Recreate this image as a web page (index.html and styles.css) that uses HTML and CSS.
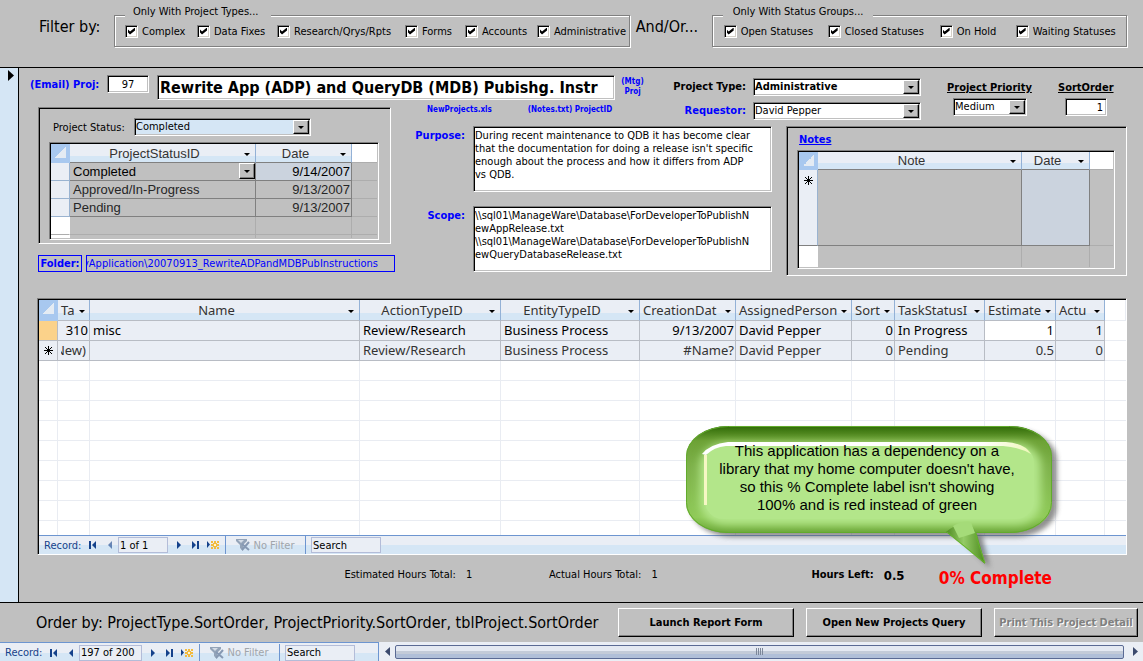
FILE: index.html
```html
<!DOCTYPE html>
<html lang="en">
<head>
<meta charset="utf-8">
<title>Projects</title>
<link rel="stylesheet" href="styles.css">
</head>
<body>
<svg width="0" height="0" class="defs" aria-hidden="true">
  <symbol id="i-first" viewBox="0 0 8 8"><path d="M0 0h2v8H0zM7 0v8L3 4z" fill="#15428b"/></symbol>
  <symbol id="i-prev" viewBox="0 0 8 8"><path d="M6 0v8L2 4z" fill="#15428b"/></symbol>
  <symbol id="i-next" viewBox="0 0 8 8"><path d="M2 0v8l4-4z" fill="#15428b"/></symbol>
  <symbol id="i-last" viewBox="0 0 8 8"><path d="M5 0h2v8H5zM0 0v8l4-4z" fill="#15428b"/></symbol>
  <symbol id="i-new" viewBox="0 0 12 8"><path d="M0 0v7l3-3.500z" fill="#15428b"/><path d="M4 0h2v2H4zM7 0h2v2H7zM10 0h2v2h-2zM4 3h8v2H4zM4 6h2v2H4zM7 6h2v2H7zM10 6h2v2h-2zM6 2h4v4H6z" fill="#f3bb3d"/><path d="M7 3h2v2H7z" fill="#fff6cf"/></symbol>
  <symbol id="i-filter" viewBox="0 0 14 12"><path d="M0 0h11v2L7 6v6l-3-3V6L0 2z" fill="#93a3b8"/><path d="M2 1h6L5 4z" fill="#d3dbe6"/><path d="M6 5l7 6M13 3L6 11" stroke="#8799b3" stroke-width="2" fill="none"/></symbol>
  <symbol id="i-star" viewBox="0 0 9 9"><path d="M4 0h1v9H4zM0 4h9v1H0z" fill="#000"/><path d="M1 1l7 7M8 1L1 8" stroke="#000" fill="none"/></symbol>
</svg>

<header class="filters">
  <span class="big by">Filter by:</span>
  <fieldset class="types">
    <legend>Only With Project Types...</legend>
    <div class="checks">
      <label><input type="checkbox" checked>Complex</label>
      <label><input type="checkbox" checked>Data Fixes</label>
      <label><input type="checkbox" checked>Research/Qrys/Rpts</label>
      <label><input type="checkbox" checked>Forms</label>
      <label><input type="checkbox" checked>Accounts</label>
      <label><input type="checkbox" checked>Administrative</label>
    </div>
  </fieldset>
  <span class="big or">And/Or...</span>
  <fieldset class="groups">
    <legend>Only With Status Groups...</legend>
    <div class="checks">
      <label><input type="checkbox" checked>Open Statuses</label>
      <label><input type="checkbox" checked>Closed Statuses</label>
      <label><input type="checkbox" checked>On Hold</label>
      <label><input type="checkbox" checked>Waiting Statuses</label>
    </div>
  </fieldset>
</header>

<main class="record">
  <div class="selector"><svg width="6" height="11" viewBox="0 0 6 11"><path d="M0 0v11l6-5.500z"/></svg></div>
  <div class="detail">
    <section class="form">
      <div class="title-row">
        <label class="link" for="proj">(Email) Proj:</label>
        <input id="proj" class="sunk proj" value="97">
        <input class="sunk title" aria-label="Project name" value="Rewrite App (ADP) and QueryDB (MDB) Pubishg. Instr">
        <a class="tiny" href="#">(Mtg)<br>Proj</a>
      </div>
      <div class="links">
        <a class="tiny" href="#">NewProjects.xls</a>
        <a class="tiny" href="#">(Notes.txt) ProjectID</a>
      </div>
      <div class="meta">
        <div class="pairs">
          <label for="ptype">Project Type:</label>
          <div class="combo bold"><select id="ptype"><option>Administrative</option></select><i></i></div>
          <label class="link" for="req">Requestor:</label>
          <div class="combo"><select id="req"><option>David Pepper</option></select><i></i></div>
        </div>
        <div class="stack prio">
          <label for="prio">Project Priority</label>
          <div class="combo"><select id="prio"><option>Medium</option></select><i></i></div>
        </div>
        <div class="stack sort">
          <label for="sort">SortOrder</label>
          <input id="sort" class="sunk" value="1">
        </div>
      </div>

      <div class="status">
        <div class="panel">
          <div class="status-row">
            <label for="pstat">Project Status:</label>
            <div class="combo blue"><select id="pstat"><option>Completed</option></select><i></i></div>
          </div>
          <div class="frame">
            <table class="sheet small">
              <colgroup><col class="w19"><col><col class="w96"><col class="w25"></colgroup>
              <thead><tr><th class="corner"></th><th><span class="h"><b>ProjectStatusID</b><u></u></span></th><th><span class="h"><b>Date</b><u></u></span></th><th class="blank"></th></tr></thead>
              <tbody>
                <tr class="cur"><th></th><td><span class="cell-combo">Completed<i></i></span></td><td class="num sel">9/14/2007</td><td class="off"></td></tr>
                <tr><th></th><td>Approved/In-Progress</td><td class="num">9/13/2007</td><td class="off"></td></tr>
                <tr><th></th><td>Pending</td><td class="num">9/13/2007</td><td class="off"></td></tr>
                <tr class="empty"><th></th><td></td><td></td><td></td></tr>
                <tr class="empty sliver"><th></th><td></td><td></td><td></td></tr>
              </tbody>
            </table>
          </div>
        </div>
        <div class="folder">
          <label for="path">Folder:</label>
          <a id="path" href="#">cyApplication\20070913_RewriteADPandMDBPubInstructions</a>
        </div>
      </div>

      <div class="memos">
        <label class="link" for="purpose">Purpose:</label>
        <textarea id="purpose" class="sunk">During recent maintenance to QDB it has become clear
that the documentation for doing a release isn't specific
enough about the process and how it differs from ADP
vs QDB.</textarea>
        <label class="link" for="scope">Scope:</label>
        <textarea id="scope" class="sunk">\\sql01\ManageWare\Database\ForDeveloperToPublishN
ewAppRelease.txt
\\sql01\ManageWare\Database\ForDeveloperToPublishN
ewQueryDatabaseRelease.txt</textarea>
      </div>

      <div class="panel notes">
        <a href="#" class="notes-link">Notes</a>
        <div class="frame">
          <table class="sheet small">
            <colgroup><col class="w19"><col><col class="w68"><col class="w23"></colgroup>
            <thead><tr><th class="corner"></th><th><span class="h"><b>Note</b><u></u></span></th><th><span class="h"><b>Date</b><u></u></span></th><th class="blank"></th></tr></thead>
            <tbody>
              <tr class="tall"><th><svg width="9" height="9"><use href="#i-star"/></svg></th><td></td><td class="sel"></td><td class="off"></td></tr>
              <tr class="empty"><th></th><td></td><td></td><td></td></tr>
            </tbody>
          </table>
        </div>
      </div>
    </section>

    <section class="tasks">
      <table class="sheet main">
        <colgroup><col class="w19"><col class="w32"><col><col class="w141"><col class="w139"><col class="w96"><col class="w116"><col class="w43"><col class="w90"><col class="w71"><col class="w49"><col class="w21"></colgroup>
        <thead><tr><th class="corner"></th>
          <th><span class="h cut"><b>Ta</b><u></u></span></th>
          <th><span class="h"><b>Name</b><u></u></span></th>
          <th><span class="h"><b>ActionTypeID</b><u></u></span></th>
          <th><span class="h"><b>EntityTypeID</b><u></u></span></th>
          <th><span class="h cut"><b>CreationDat</b><u></u></span></th>
          <th><span class="h cut"><b>AssignedPerson</b><u></u></span></th>
          <th><span class="h cut"><b>Sort</b><u></u></span></th>
          <th><span class="h cut"><b>TaskStatusI</b><u></u></span></th>
          <th><span class="h cut"><b>Estimate</b><u></u></span></th>
          <th><span class="h cut"><b>Actu</b><u></u></span></th>
          <th class="blank"></th></tr></thead>
        <tbody>
          <tr class="cur"><th class="here"></th><td class="num">310</td><td>misc</td><td>Review/Research</td><td>Business Process</td><td class="num">9/13/2007</td><td>David Pepper</td><td class="num">0</td><td>In Progress</td><td class="num focus">1</td><td class="num">1</td><td class="off"></td></tr>
          <tr><th><svg width="9" height="9"><use href="#i-star"/></svg></th><td><span class="tail">(New)</span></td><td></td><td>Review/Research</td><td>Business Process</td><td class="num">#Name?</td><td>David Pepper</td><td class="num">0</td><td>Pending</td><td class="num">0.5</td><td class="num">0</td><td class="off"></td></tr>
          <tr class="empty"><th></th><td></td><td></td><td></td><td></td><td></td><td></td><td></td><td></td><td></td><td></td><td></td></tr>
          <tr class="empty"><th></th><td></td><td></td><td></td><td></td><td></td><td></td><td></td><td></td><td></td><td></td><td></td></tr>
          <tr class="empty"><th></th><td></td><td></td><td></td><td></td><td></td><td></td><td></td><td></td><td></td><td></td><td></td></tr>
          <tr class="empty"><th></th><td></td><td></td><td></td><td></td><td></td><td></td><td></td><td></td><td></td><td></td><td></td></tr>
          <tr class="empty"><th></th><td></td><td></td><td></td><td></td><td></td><td></td><td></td><td></td><td></td><td></td><td></td></tr>
          <tr class="empty"><th></th><td></td><td></td><td></td><td></td><td></td><td></td><td></td><td></td><td></td><td></td><td></td></tr>
          <tr class="empty"><th></th><td></td><td></td><td></td><td></td><td></td><td></td><td></td><td></td><td></td><td></td><td></td></tr>
          <tr class="empty"><th></th><td></td><td></td><td></td><td></td><td></td><td></td><td></td><td></td><td></td><td></td><td></td></tr>
          <tr class="empty sliver"><th></th><td></td><td></td><td></td><td></td><td></td><td></td><td></td><td></td><td></td><td></td><td></td></tr>
        </tbody>
      </table>
      <nav class="recnav">
        <label for="rec1">Record:</label>
        <button aria-label="First"><svg width="8" height="8"><use href="#i-first"/></svg></button>
        <button aria-label="Previous" disabled><svg width="8" height="8"><use href="#i-prev"/></svg></button>
        <input id="rec1" class="pos" value="1 of 1">
        <button aria-label="Next"><svg width="8" height="8"><use href="#i-next"/></svg></button>
        <button aria-label="Last"><svg width="8" height="8"><use href="#i-last"/></svg></button>
        <button aria-label="New"><svg width="12" height="8"><use href="#i-new"/></svg></button>
        <button class="nofilter" disabled><svg width="14" height="12"><use href="#i-filter"/></svg>No Filter</button>
        <input class="search" aria-label="Search" value="Search">
      </nav>
      <div class="callout">
        <svg width="390" height="158" viewBox="680 418 390 158" aria-hidden="true">
          <defs>
            <linearGradient id="rim" x1="0" y1="0" x2="0" y2="1">
              <stop offset="0" stop-color="#2f6a06"/><stop offset=".14" stop-color="#6da236"/><stop offset=".4" stop-color="#7fb34c"/><stop offset=".85" stop-color="#8fca58"/><stop offset="1" stop-color="#69a536"/>
            </linearGradient>
            <linearGradient id="tip" x1="0" y1="0" x2="1" y2="0">
              <stop offset="0" stop-color="#4f8a22"/><stop offset=".45" stop-color="#94cb66"/><stop offset="1" stop-color="#4c8a1e"/>
            </linearGradient>
            <linearGradient id="shine" x1="0" y1="0" x2="1" y2="0">
              <stop offset="0" stop-color="#fff"/><stop offset=".85" stop-color="#fff"/><stop offset="1" stop-color="#eef7b8"/>
            </linearGradient>
            <filter id="soft" x="-20%" y="-20%" width="140%" height="140%"><feGaussianBlur stdDeviation="2.500"/></filter>
            <filter id="glow" x="-20%" y="-20%" width="140%" height="140%"><feGaussianBlur stdDeviation="4"/></filter>
            <clipPath id="body"><rect x="686" y="426" width="366" height="107" rx="42" ry="30"/></clipPath>
          </defs>
          <g fill="#555" opacity=".65" filter="url(#soft)"><rect x="691" y="430" width="366" height="107" rx="42" ry="30"/><path d="M950 528l40 40-10-40z"/></g>
          <rect x="686" y="426" width="366" height="107" rx="42" ry="30" fill="url(#rim)"/>
          <g clip-path="url(#body)"><rect x="700" y="443" width="341" height="82" rx="26" ry="22" fill="#b3e68a" filter="url(#glow)"/></g>
          <rect x="705" y="445" width="329" height="74" rx="18" fill="#b3e68a"/>
          <path d="M702 454q8-10 26-12h278q18 1 25 12-12-7-28-8H726q-12 1-20 9z" fill="url(#shine)"/>
          <path d="M704 455h3v50h-3z" fill="#f6f7c4"/>
          <rect x="686.500" y="426.500" width="365" height="106" rx="42" ry="30" fill="none" stroke="#62ab2c"/>
          <path d="M946 532q10-8 16-8 9-4 9 0l6 10 8 30z" fill="url(#tip)"/>
          <path d="M947 532l38 31-10-30" fill="none" stroke="#66b52b"/>
          <path d="M953 526q10-6 18-4l4 11-16 5z" fill="#a5db79"/>
        </svg>
        <p>This application has a dependency on a<br>library that my home computer doesn't have,<br>so this % Complete label isn't showing<br>100% and is red instead of green</p>
      </div>
    </section>

    <section class="totals">
      <span>Estimated Hours Total:</span><output>1</output>
      <span>Actual Hours Total:</span><output>1</output>
      <strong>Hours Left:</strong><output class="left">0.5</output>
      <strong class="done">0% Complete</strong>
    </section>
  </div>
</main>

<footer class="actions">
  <span class="big">Order by: ProjectType.SortOrder, ProjectPriority.SortOrder, tblProject.SortOrder</span>
  <button>Launch Report Form</button>
  <button>Open New Projects Query</button>
  <button class="narrow" disabled>Print This Project Detail</button>
</footer>

<div class="bottom">
  <nav class="recnav">
    <label for="rec2">Record:</label>
    <button aria-label="First"><svg width="8" height="8"><use href="#i-first"/></svg></button>
    <button aria-label="Previous"><svg width="8" height="8"><use href="#i-prev"/></svg></button>
    <input id="rec2" class="pos wide" value="197 of 200">
    <button aria-label="Next"><svg width="8" height="8"><use href="#i-next"/></svg></button>
    <button aria-label="Last"><svg width="8" height="8"><use href="#i-last"/></svg></button>
    <button aria-label="New"><svg width="12" height="8"><use href="#i-new"/></svg></button>
    <button class="nofilter" disabled><svg width="14" height="12"><use href="#i-filter"/></svg>No Filter</button>
    <input class="search" aria-label="Search" value="Search">
  </nav>
  <div class="scroll">
    <svg width="5" height="9" viewBox="0 0 5 9"><path d="M5 0v9L0 4.500z" fill="#3c4a6e"/></svg>
    <div class="thumb"><svg width="7" height="7"><path d="M0 0h1v7H0zM2 0h1v7H2zM4 0h1v7H4zM6 0h1v7H6z" fill="#7c8799"/></svg></div>
    <svg width="5" height="9" viewBox="0 0 5 9"><path d="M0 0v9l5-4.500z" fill="#3c4a6e"/></svg>
  </div>
</div>
</body>
</html>
```
FILE: styles.css
```css
:root {
  --ui: "DejaVu Sans Condensed", "DejaVu Sans", sans-serif;
  --face: #c0c0c0;
  --sky: #d5e6f5;
  --link: #0000ff;
}

* { box-sizing: border-box; }

body {
  margin: 0;
  min-height: 100vh;
  display: flex;
  flex-direction: column;
  background: var(--face);
  color: #000;
  font: 11px/13px var(--ui);
  overflow: hidden;
}

input, select, textarea, button {
  font: inherit;
  color: inherit;
  margin: 0;
  border-radius: 0;
}

a { color: var(--link); text-decoration: none; }
.defs { display: block; position: absolute; }
.big { font-size: 16px; line-height: 20px; white-space: nowrap; }
.link { color: var(--link); }

/* header */
.filters {
  display: flex;
  align-items: flex-start;
  height: 68px;
  padding: 6px 16px 0 39px;
  border-bottom: 1px solid #000;
}
.filters .big { padding-top: 11px; flex: none; }
.filters .by { width: 63px; }
.filters .or { width: 67px; }
fieldset {
  margin: 0;
  padding: 0 0 8px 10px;
  border: 1px solid #808080;
  box-shadow: 1px 1px #fff, inset 1px 1px #fff;
  min-width: 0;
}
legend {
  width: 146px;
  padding: 0 8px 6px;
  line-height: 12px;
  white-space: nowrap;
  background: var(--face);
}
.groups legend { width: 150px; padding-left: 10px; }
.types { flex: 517 1 0; margin: 0 6px 0 12px; }
.groups { flex: 414 1 0; margin-left: 9px; }
.checks { display: grid; grid-template-columns: 72px 80px 128px 60px 72px auto; }
.groups .checks { grid-template-columns: 104px 112px 76px auto; padding-left: 1px; }
.checks label { display: flex; align-items: center; gap: 4px; height: 14px; white-space: nowrap; }
.checks input {
  appearance: none;
  flex: none;
  width: 13px;
  height: 13px;
  background: #fff;
  border: 1px solid;
  border-color: #808080 #fff #fff #808080;
  box-shadow: inset 1px 1px #000, inset -1px -1px #d4d0c8;
}
.checks input:checked::before {
  content: "";
  display: block;
  width: 7px;
  height: 7px;
  margin: 2px;
  background: #000;
  clip-path: polygon(0 29%, 29% 57%, 100% 0, 100% 43%, 29% 100%, 0 71%);
}

/* record area */
.record { display: flex; flex: 1; }
.selector { width: 19px; flex: none; padding: 2px 0 0 8px; background: var(--sky); border-right: 1px solid #000; }
.selector svg { display: block; }
.detail { flex: 1; min-width: 0; display: flex; flex-direction: column; padding: 7px 16px 0 11px; }

.form {
  display: grid;
  grid-template-columns: 377px 243px 128px 1fr;
  grid-template-rows: 32px 19px auto;
}
.title-row { grid-column: 1 / 3; grid-row: 1; display: flex; align-items: flex-start; font-weight: bold; }
.title-row label { width: 77px; padding-top: 3px; white-space: nowrap; }
.sunk, .combo, .frame, .tasks, .panel {
  border: 1px solid;
  border-color: #808080 #fff #fff #808080;
  box-shadow: inset 1px 1px #000, inset -1px -1px #c0c0c0;
}
.sunk { background: #fff; outline: none; }
.proj { width: 42px; height: 18px; text-align: center; font-weight: normal; margin-right: 8px; }
.title { flex: 1; min-width: 0; height: 25px; padding: 0 2px; font-size: 16px; line-height: 20px; font-weight: bold; }
.tiny { font-size: 8px; line-height: 10px; font-weight: bold; text-align: center; white-space: nowrap; }
.title-row .tiny { width: 35px; padding-top: 2px; }
.links { grid-column: 2; grid-row: 2; display: flex; gap: 36px; padding-left: 20px; white-space: nowrap; }
.links .tiny { padding-top: 0; line-height: 6px; }

.meta { grid-column: 3 / 5; grid-row: 1 / 3; display: flex; align-items: flex-start; font-weight: bold; }
.pairs { display: grid; grid-template-columns: 96px 168px; column-gap: 7px; row-gap: 6px; padding-top: 3px; }
.pairs label { text-align: right; line-height: 18px; white-space: nowrap; }
.pairs .combo { font-weight: normal; }
.pairs .bold { font-weight: bold; }
.combo { display: inline-grid; grid-template: 16px / minmax(0, 1fr) 17px; background: #fff; height: 18px; }
.combo select {
  grid-area: 1 / 1 / 2 / 3;
  appearance: none;
  width: 100%;
  height: 16px;
  border: 0;
  padding: 0 1px;
  line-height: 16px;
  background: none;
  outline: none;
}
.combo i, .cell-combo i {
  grid-area: 1 / 2;
  width: 16px;
  height: 14px;
  margin-top: 1px;
  pointer-events: none;
  background: var(--face);
  border: 1px solid;
  border-color: #fff #000 #000 #fff;
  box-shadow: inset -1px -1px #808080;
  display: grid;
  place-items: center;
}
.combo i::before, .cell-combo i::before, .h u::before {
  content: "";
  border: solid transparent;
  border-width: 3px 3px 0;
  border-top-color: #000;
}
.combo.blue { background: var(--sky); width: 177px; }
.stack { display: flex; flex-direction: column; gap: 4px; font-weight: bold; }
.stack label { text-decoration: underline; white-space: nowrap; padding-top: 6px; }
.stack .combo, .stack input { font-weight: normal; }
.prio { margin-left: 26px; width: 88px; }
.prio .combo { width: 74px; margin-left: 6px; }
.sort { margin-left: 23px; }
.sort input { width: 42px; height: 18px; margin-left: 7px; padding: 0 3px; text-align: right; }

.status { grid-column: 1; grid-row: 2 / 4; padding-left: 8px; }
.panel { padding: 10px 11px 3px 10px; box-shadow: inset 1px 1px #000; }
.status .panel { width: 353px; }
.status-row { display: flex; justify-content: space-between; align-items: center; padding: 0 68px 0 4px; margin-bottom: 6px; }
.frame { overflow: hidden; padding: 1px; }
.folder { display: flex; gap: 4px; margin-top: 11px; width: 357px; color: var(--link); }
.folder label, .folder a { border: 1px solid var(--link); height: 17px; line-height: 15px; }
.folder label { width: 44px; font-weight: bold; text-align: center; }
.folder a { flex: 1; min-width: 0; overflow: hidden; display: flex; justify-content: flex-end; padding-right: 16px; white-space: nowrap; }

.memos {
  grid-column: 2 / 4;
  grid-row: 3;
  display: grid;
  grid-template-columns: 58px 299px;
  grid-template-rows: 66px 66px;
  row-gap: 14px;
  column-gap: 8px;
  font-weight: bold;
}
.memos label { text-align: right; padding-top: 3px; }
.memos textarea { resize: none; overflow: hidden; white-space: pre; padding: 2px 1px 0 1px; font-weight: normal; }

.notes { grid-column: 4; grid-row: 3; margin-left: 8px; padding: 6px 11px 6px 10px; }
.notes-link { display: block; margin: 0 0 4px 2px; font-weight: bold; text-decoration: underline; }

/* datasheets */
.sheet { width: 100%; table-layout: fixed; border-collapse: separate; border-spacing: 0; }
.sheet th, .sheet td { padding: 0 3px; overflow: hidden; white-space: nowrap; font-weight: normal; text-align: left; }
.sheet th { text-align: center; }
.sheet .num { text-align: right; padding: 0 1px; }
.small { font: 13px/17px "Liberation Sans", Arial, sans-serif; }
.small th, .small td { height: 18px; border-right: 1px solid #808080; border-bottom: 1px solid #808080; }
.small tbody th { background: #eaeef5; border-right-color: #9ab3d0; border-bottom-color: #9ab3d0; }
.sheet thead th { background: linear-gradient(#eaeef5 66%, #d5e6f5 66%); border-right-color: #93b1d6; color: #333; padding: 0; }
.sheet thead .corner { background: linear-gradient(135deg, transparent 50%, #e4ebf3 50%) 4px 3px / 11px 11px no-repeat #a8c8ef; border-color: #a8c8ef; }
.sheet thead .blank { background: #fff; }
.small td { color: #262626; }
.small .cur td { color: #000; }
.small td.sel { background: #cbd3de; }
.small td.off { border-right: 0; border-bottom-color: #adadad; }
.small .blank { border-right: 0; border-bottom-color: #adadad; }
.small .empty td { border-color: #adadad; }
.small .empty td:last-child { border-right: 0; }
.small .empty th { background: #fff; border-color: #fff #fff #adadad; }
.small .sliver th, .small .sliver td { height: 3px; border-bottom: 0; }
.status thead th { height: 19px; }
.notes .tall th, .notes .tall td { height: 76px; }
.notes .tall th { vertical-align: top; padding-top: 6px; border-bottom-color: #808080; }
.notes .empty th, .notes .empty td { height: 21px; border-bottom: 0; }
.sheet svg { display: block; margin: auto; }
.h { display: flex; align-items: center; }
.h b { flex: 1; min-width: 0; overflow: hidden; font-weight: normal; text-align: center; }
.h.cut b { text-align: left; padding-left: 3px; }
.h u { flex: none; width: 15px; margin-right: 1px; display: grid; place-items: center; padding-top: 2px; }
.h.cut u { width: 13px; }
.cell-combo { display: flex; justify-content: space-between; margin-right: -3px; }
.cell-combo i { height: 16px; margin-top: 0; }

.w19 { width: 19px; } .w21 { width: 21px; } .w23 { width: 23px; } .w25 { width: 25px; }
.w32 { width: 32px; } .w43 { width: 43px; } .w49 { width: 49px; } .w68 { width: 68px; }
.w71 { width: 71px; } .w90 { width: 90px; } .w96 { width: 96px; } .w116 { width: 116px; }
.w139 { width: 139px; } .w141 { width: 141px; }

.tasks { position: relative; margin: 22px 0 0 7px; padding: 1px 0 0 1px; background: #fff; }
.main { font: 13px/19px "Noto Sans", "Open Sans", sans-serif; }
.main th, .main td { height: 20px; border-right: 1px solid #b8bcc4; border-bottom: 1px solid #b8bcc4; background: #eaeef5; }
.main thead th { height: 21px; }
.main td { color: #333; }
.main .cur td { color: #000; }
.main .here { background: #fbd28a; }
.main .num.focus { background: #fff; }
.main .off, .main .empty td, .main .empty th { background: #fff; border-color: #e9ecf2; }
.main .blank { border-color: #e9ecf2; }
.main td:last-child { border-right: 0; }
.main .sliver th, .main .sliver td { height: 14px; border-bottom: 0; }
.tail { display: flex; justify-content: flex-end; overflow: hidden; }

/* record navigation */
.recnav {
  display: flex;
  align-items: center;
  height: 20px;
  padding-left: 5px;
  background: linear-gradient(#eaeef5 50%, #d5e6f5 50%);
  border-top: 1px solid #6d95d0;
}
.tasks .recnav { height: 19px; }
.recnav label { color: #15428b; width: 40px; }
.recnav button { width: 17px; height: 18px; padding: 0; border: 0; background: none; display: flex; align-items: center; justify-content: center; }
.recnav button:disabled svg { opacity: .6; }
.recnav input { height: 16px; padding: 0 1px; border: 1px solid #b3bcd8; background: #eaeef5; outline: none; }
.recnav .pos { width: 50px; margin-right: 2px; }
.recnav .wide { width: 63px; }
.recnav .nofilter { width: 81px; height: 18px; margin: 0 5px 0 4px; gap: 3px; color: #a0a5ab; border: solid #6d95d0; border-width: 0 1px; }
.recnav .nofilter:disabled svg { opacity: 1; }
.recnav .search { width: 70px; }

.callout { position: absolute; right: 56px; bottom: -22px; width: 390px; }
.callout svg { display: block; }
.callout p { position: absolute; top: 24px; left: 6px; width: 362px; margin: 0; text-align: center; font: 15px/18px "Liberation Sans", Arial, sans-serif; white-space: nowrap; }

.totals { display: flex; align-items: flex-start; justify-content: flex-end; height: 20px; margin: 13px 75px 0 0; white-space: nowrap; }
.totals output { width: 30px; margin-left: 10px; }
.totals span + output { margin-right: 53px; }
.totals span:nth-of-type(2) + output { margin-right: 130px; }
.totals .left { font-size: 13px; line-height: 15px; font-weight: bold; margin-right: 25px; }
.totals .done { font-size: 17px; line-height: 20px; color: #f00; }

.actions { display: flex; align-items: center; gap: 12px; height: 40px; padding: 0 5px 0 36px; border-top: 1px solid #000; }
.actions .big { flex: 1; }
.actions button {
  width: 176px;
  height: 29px;
  padding: 0;
  font-weight: bold;
  background: var(--face);
  border: 1px solid;
  border-color: #fff #000 #000 #fff;
  box-shadow: inset -1px -1px #808080;
  white-space: nowrap;
}
.actions .narrow { width: 144px; color: #808080; text-shadow: 1px 1px #fff; }

.bottom { display: flex; height: 19px; background: #eaeef5; }
.bottom .recnav { width: 379px; flex: none; border-right: 1px solid #6d95d0; }
.scroll { flex: 1; display: flex; align-items: center; gap: 5px; padding: 0 5px 0 6px; }
.scroll .thumb + svg { margin-left: 4px; }
.thumb {
  flex: 1;
  height: 14px;
  display: grid;
  place-items: center;
  border: 1px solid #5a6a94;
  border-radius: 2px;
  background: linear-gradient(#e4e9f2 45%, #c3cbd8 45% 70%, #b0bfd8 70%);
}
```
